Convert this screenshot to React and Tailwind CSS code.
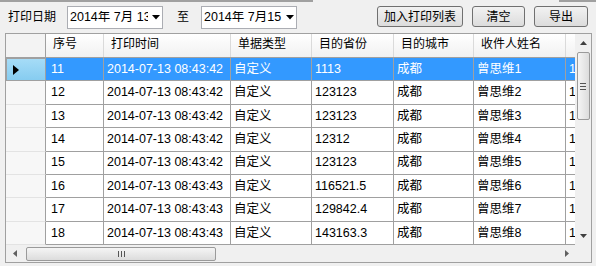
import React from "react";

const ROWS = [
  ["11", "2014-07-13 08:43:42", "自定义", "1113", "成都", "曾思维1"],
  ["12", "2014-07-13 08:43:42", "自定义", "123123", "成都", "曾思维2"],
  ["13", "2014-07-13 08:43:42", "自定义", "123123", "成都", "曾思维3"],
  ["14", "2014-07-13 08:43:42", "自定义", "12312", "成都", "曾思维4"],
  ["15", "2014-07-13 08:43:42", "自定义", "123123", "成都", "曾思维5"],
  ["16", "2014-07-13 08:43:43", "自定义", "116521.5", "成都", "曾思维6"],
  ["17", "2014-07-13 08:43:43", "自定义", "129842.4", "成都", "曾思维7"],
  ["18", "2014-07-13 08:43:43", "自定义", "143163.3", "成都", "曾思维8"],
];

// 列宽和表头
const COLS = [
  { title: "序号", w: "w-[58px]", pad: "pl-[5px]" },
  { title: "打印时间", w: "w-[127px]", pad: "pl-[3px]" },
  { title: "单据类型", w: "w-[81px]", pad: "pl-[3px]" },
  { title: "目的省份", w: "w-[82px]", pad: "pl-[3px]" },
  { title: "目的城市", w: "w-[80px]", pad: "pl-[3px]" },
  { title: "收件人姓名", w: "w-[92px]", pad: "pl-[3px]" },
  { title: "", w: "w-[60px]", pad: "pl-[3px]" },
];

function DateBox({ text }) {
  return (
    <div className="flex h-[23px] w-[96px] items-center border border-[#abadb3] bg-white">
      <div className="ml-[2px] w-[78px] overflow-hidden whitespace-pre text-[12.5px] leading-none">
        {text}
      </div>
      <svg width="8" height="5" viewBox="0 0 8 5" className="ml-[4px]">
        <path d="M0 0 L8 0 L4 4.5 Z" fill="#000" />
      </svg>
    </div>
  );
}

function Btn({ children, w }) {
  return (
    <button
      className={`${w} h-[21px] rounded-[3px] border border-[#707070] bg-gradient-to-b from-[#f2f2f2] to-[#dcdcdc] text-[12px] leading-none text-black`}
    >
      {children}
    </button>
  );
}

export default function App() {
  return (
    <div className="h-[266px] w-[596px] overflow-hidden bg-[#f0f0f0] font-['Liberation_Sans','Noto_Sans_CJK_SC',sans-serif] text-black">
      {/* 顶部的线 */}
      <div className="flex h-[2px]">
        <div className="w-[313px] bg-[#a0a0a0]" />
        <div className="flex-1" />
        <div className="w-[37px] bg-[#a0a0a0]" />
      </div>

      {/* 工具栏 */}
      <div className="flex h-[31px] items-start pt-[4px]">
        <span className="mt-[5px] w-[67px] pl-[8px] text-[12px] leading-none">打印日期</span>
        <DateBox text="2014年 7月 13日" />
        <span className="mt-[5px] w-[38px] pl-[14px] text-[12px] leading-none">至</span>
        <DateBox text="2014年 7月15日" />
        <div className="ml-[80px] flex gap-[9px]">
          <Btn w="w-[86px]">加入打印列表</Btn>
          <Btn w="w-[53px]">清空</Btn>
          <Btn w="w-[54px]">导出</Btn>
        </div>
      </div>

      {/* 表格 */}
      <div className="ml-[5px] flex h-[230px] w-[587px] border border-[#a0a0a0] bg-white">
        <div className="flex w-[569px] flex-col">
          <div className="flex-1 overflow-hidden">
            {/* 表头 */}
            <div className="flex h-[24px] border-b border-[#a0a0a0] bg-gradient-to-b from-white to-[#f1f1f1] text-[12px]">
              <div className="w-[40px] shrink-0 border-r border-[#a0a0a0] bg-[#f3f3f3]" />
              {COLS.map((c, i) => (
                <div
                  key={i}
                  className={`${c.w} shrink-0 border-r border-[#dadada] pl-[7px] pt-[4px] leading-none whitespace-nowrap`}
                >
                  {c.title}
                </div>
              ))}
            </div>
            {/* 数据行 */}
            {ROWS.map((r, i) => {
              const sel = i === 0;
              return (
                <div key={i} className="flex h-[23.4px] text-[12.5px]">
                  <div
                    className={`flex w-[40px] shrink-0 items-center border-r border-[#a0a0a0] ${
                      sel
                        ? "border border-[#3c8fc0] bg-gradient-to-b from-[#a6dcf7] to-[#86ccf0]"
                        : "border-b border-b-[#e3e3e3] bg-[#f7f7f7]"
                    }`}
                  >
                    {sel && (
                      <svg width="6" height="10" viewBox="0 0 6 10" className="ml-[6px]">
                        <path d="M0 0 L6 5 L0 10 Z" fill="#000" />
                      </svg>
                    )}
                  </div>
                  {[...r, "1"].map((v, j) => (
                    <div
                      key={j}
                      className={`${COLS[j].w} ${COLS[j].pad} flex shrink-0 items-center whitespace-nowrap border-b border-r border-[#a0a0a0] ${
                        sel ? "bg-[#3399ff] text-white" : ""
                      }`}
                    >
                      {v}
                    </div>
                  ))}
                </div>
              );
            })}
          </div>

          {/* 水平滚动条 */}
          <div className="flex h-[17px] items-center bg-[#f0f0f0]">
            <div className="flex w-[17px] justify-center">
              <svg width="4" height="7" viewBox="0 0 4 7">
                <path d="M4 0 L0 3.5 L4 7 Z" fill="#606060" />
              </svg>
            </div>
            <div className="ml-[3px] flex h-[14px] w-[190px] items-center justify-center rounded-[2px] border border-[#9a9a9a] bg-gradient-to-b from-[#f5f5f5] to-[#dcdcdc]">
              <div className="flex gap-[2px]">
                <div className="h-[6px] w-px bg-[#555]" />
                <div className="h-[6px] w-px bg-[#555]" />
                <div className="h-[6px] w-px bg-[#555]" />
              </div>
            </div>
            <div className="flex-1" />
            <div className="flex w-[17px] justify-center">
              <svg width="4" height="7" viewBox="0 0 4 7">
                <path d="M0 0 L4 3.5 L0 7 Z" fill="#606060" />
              </svg>
            </div>
          </div>
        </div>

        {/* 垂直滚动条 */}
        <div className="flex w-[16px] flex-col bg-[#f0f0f0]">
          <div className="flex h-[18px] items-center justify-center">
            <svg width="7" height="4" viewBox="0 0 7 4">
              <path d="M0 4 L3.5 0 L7 4 Z" fill="#404040" />
            </svg>
          </div>
          <div className="mx-auto flex h-[68px] w-[13px] items-center justify-center rounded-[2px] border border-[#9a9a9a] bg-gradient-to-r from-[#f5f5f5] to-[#dcdcdc]">
            <div className="flex flex-col gap-[2px]">
              <div className="h-px w-[6px] bg-[#555]" />
              <div className="h-px w-[6px] bg-[#555]" />
              <div className="h-px w-[6px] bg-[#555]" />
            </div>
          </div>
          <div className="flex-1" />
          <div className="flex h-[18px] items-center justify-center">
            <svg width="7" height="4" viewBox="0 0 7 4">
              <path d="M0 0 L3.5 4 L7 0 Z" fill="#404040" />
            </svg>
          </div>
          <div className="h-[17px] bg-[#f0f0f0]" />
        </div>
      </div>
    </div>
  );
}
